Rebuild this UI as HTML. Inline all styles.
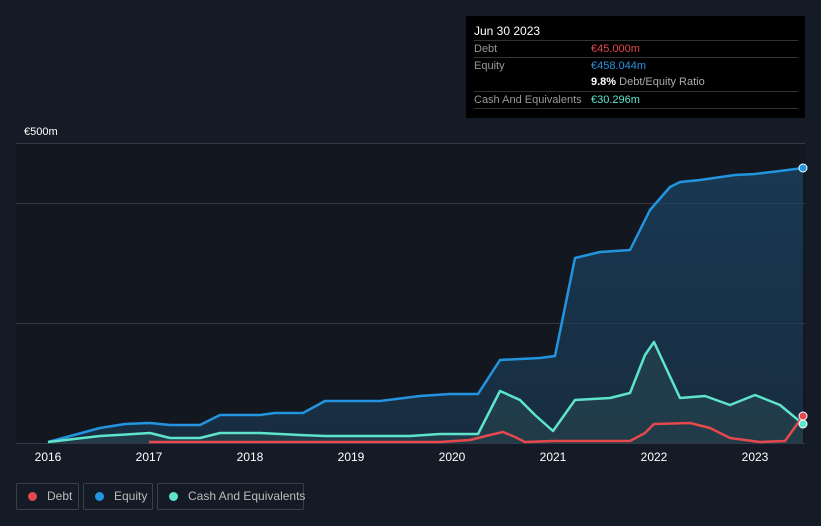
<!DOCTYPE html><html><head><meta charset="utf-8"><style>
body{margin:0;width:821px;height:526px;background:#151b26;font-family:"Liberation Sans",sans-serif;overflow:hidden;position:relative}
.tt{position:absolute;left:466px;top:16px;width:339px;height:102px;background:#000;}
.tt .h{position:absolute;left:8px;top:8px;color:#fff;font-size:12px}
.row{position:absolute;left:8px;width:324px;border-top:1px solid #333;font-size:11px;color:#999;height:17px;line-height:17px;white-space:nowrap}
.row span{position:absolute;left:117px}
.leg{position:absolute;top:483px;height:27px;border:1px solid #3a404a;border-radius:2px;color:#bbb;font-size:12px;line-height:25px;box-sizing:border-box;white-space:nowrap}
.leg i{display:inline-block;width:9px;height:9px;border-radius:50%;margin:0 10px 0 11px;vertical-align:-1px}
.lab{position:absolute;color:#fff;font-size:11px}
</style></head><body>
<div class="tt"><div class="h">Jun 30 2023</div>
<div class="row" style="top:24px">Debt<span style="color:#e5484d">€45.000m</span></div>
<div class="row" style="top:41px">Equity<span style="color:#2394df">€458.044m</span></div>
<div class="row" style="top:58px;border-top:none"><span style="color:#aaa"><b style="color:#fff">9.8%</b> Debt/Equity Ratio</span></div>
<div class="row" style="top:75px">Cash And Equivalents<span style="color:#5ee4cc">€30.296m</span></div>
<div class="row" style="top:92px"></div></div>
<div class="lab" style="left:24px;top:126px">€500m</div>
<div class="lab" style="left:24px;top:426px">€0</div>
<svg width="821" height="526" style="position:absolute;left:0;top:0">
<defs><linearGradient id="g" x1="0" y1="0" x2="0" y2="1"><stop offset="0" stop-color="#1b4668" stop-opacity=".7"/><stop offset="1" stop-color="#1b3a55" stop-opacity=".6"/></linearGradient></defs>
<rect x="16" y="143" width="789" height="300" fill="#131820"/>
<g stroke="#343a44" stroke-width="1"><line x1="16" y1="143.5" x2="805" y2="143.5"/><line x1="16" y1="203.5" x2="805" y2="203.5"/><line x1="16" y1="323.5" x2="805" y2="323.5"/><line x1="16" y1="443.5" x2="805" y2="443.5"/></g>
<path d="M48,442 L100,428 L125,424 L150,423 L170,425 L200,425 L220,415 L260,415 L275,413 L303,413 L325,401 L380,401 L420,396 L450,394 L478,394 L500,360 L540,358 L555,356 L575,258 L600,252 L630,250 L650,210 L670,187 L680,182 L700,180 L735,175 L755,174 L780,171 L803,168 L803,443 L48,443Z" fill="url(#g)"/>
<path d="M48,442 L100,436 L150,433 L170,438 L200,438 L220,433 L260,433 L300,435 L325,436 L410,436 L440,434 L478,434 L500,391 L520,400 L535,415 L553,431 L575,400 L610,398 L630,393 L645,355 L654,342 L660,355 L680,398 L705,396 L730,405 L755,395 L780,405 L803,424 L803,443 L48,443Z" fill="#2a4a52" opacity=".5"/>
<path d="M48,442 L100,428 L125,424 L150,423 L170,425 L200,425 L220,415 L260,415 L275,413 L303,413 L325,401 L380,401 L420,396 L450,394 L478,394 L500,360 L540,358 L555,356 L575,258 L600,252 L630,250 L650,210 L670,187 L680,182 L700,180 L735,175 L755,174 L780,171 L803,168" fill="none" stroke="#2394df" stroke-width="2.5" stroke-linejoin="round"/>
<path d="M48,442 L100,436 L150,433 L170,438 L200,438 L220,433 L260,433 L300,435 L325,436 L410,436 L440,434 L478,434 L500,391 L520,400 L535,415 L553,431 L575,400 L610,398 L630,393 L645,355 L654,342 L660,355 L680,398 L705,396 L730,405 L755,395 L780,405 L803,424" fill="none" stroke="#5ee4cc" stroke-width="2.5" stroke-linejoin="round"/>
<path d="M149,442 L440,442 L470,440 L490,435 L503,432 L515,437 L525,442 L553,441 L630,441 L645,433 L654,424 L690,423 L710,428 L730,438 L760,442 L785,441 L803,416" fill="none" stroke="#e5484d" stroke-width="2.5" stroke-linejoin="round"/>
<circle cx="803" cy="168" r="4" fill="#2394df" stroke="#fff" stroke-width="1"/>
<circle cx="803" cy="416" r="4" fill="#e5484d" stroke="#fff" stroke-width="1"/>
<circle cx="803" cy="424" r="4" fill="#5ee4cc" stroke="#fff" stroke-width="1"/>
<g fill="#fff" font-size="12" text-anchor="middle" font-family="Liberation Sans"><text x="48" y="461">2016</text><text x="149" y="461">2017</text><text x="250" y="461">2018</text><text x="351" y="461">2019</text><text x="452" y="461">2020</text><text x="553" y="461">2021</text><text x="654" y="461">2022</text><text x="755" y="461">2023</text></g>
</svg>
<div class="leg" style="left:16px;width:63px"><i style="background:#e5484d"></i>Debt</div>
<div class="leg" style="left:83px;width:70px"><i style="background:#2394df"></i>Equity</div>
<div class="leg" style="left:157px;width:147px"><i style="background:#5ee4cc"></i>Cash And Equivalents</div>
</body></html>
